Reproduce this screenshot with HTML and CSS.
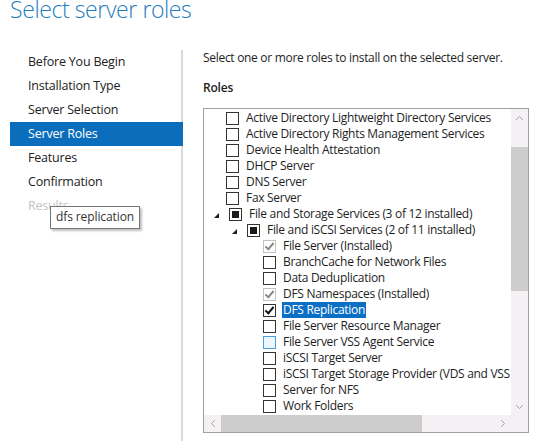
FILE: index.html
```html
<!DOCTYPE html>
<html lang="en">
<head>
  <meta charset="UTF-8">
  <title>Add Roles and Features Wizard</title>
  <link rel="stylesheet" href="styles.css">
</head>
<body>
  <h1 class="title">Select server roles</h1>

  <div class="wizard">
    <!-- Pasos del asistente -->
    <ul class="steps">
      <li>Before You Begin</li>
      <li>Installation Type</li>
      <li>Server Selection</li>
      <li class="active">Server Roles</li>
      <li>Features</li>
      <li>Confirmation</li>
      <li class="disabled">Results
        <span class="tooltip">dfs replication</span>
      </li>
    </ul>

    <!-- Contenido -->
    <div class="content">
      <p class="intro">Select one or more roles to install on the selected server.</p>
      <p class="label">Roles</p>

      <div class="listbox">
        <div class="rows">
          <div class="row lvl0"><span class="cb"></span><span class="txt">Active Directory Lightweight Directory Services</span></div>
          <div class="row lvl0"><span class="cb"></span><span class="txt">Active Directory Rights Management Services</span></div>
          <div class="row lvl0"><span class="cb"></span><span class="txt">Device Health Attestation</span></div>
          <div class="row lvl0"><span class="cb"></span><span class="txt">DHCP Server</span></div>
          <div class="row lvl0"><span class="cb"></span><span class="txt">DNS Server</span></div>
          <div class="row lvl0"><span class="cb"></span><span class="txt">Fax Server</span></div>
          <div class="row lvl0 parent"><span class="arrow"></span><span class="cb partial"></span><span class="txt">File and Storage Services (3 of 12 installed)</span></div>
          <div class="row lvl1 parent"><span class="arrow"></span><span class="cb partial"></span><span class="txt">File and iSCSI Services (2 of 11 installed)</span></div>
          <div class="row lvl2"><span class="cb checked grey"></span><span class="txt">File Server (Installed)</span></div>
          <div class="row lvl2"><span class="cb"></span><span class="txt">BranchCache for Network Files</span></div>
          <div class="row lvl2"><span class="cb"></span><span class="txt">Data Deduplication</span></div>
          <div class="row lvl2"><span class="cb checked grey"></span><span class="txt">DFS Namespaces (Installed)</span></div>
          <div class="row lvl2"><span class="cb checked"></span><span class="txt selected">DFS Replication</span></div>
          <div class="row lvl2"><span class="cb"></span><span class="txt">File Server Resource Manager</span></div>
          <div class="row lvl2"><span class="cb hover"></span><span class="txt">File Server VSS Agent Service</span></div>
          <div class="row lvl2"><span class="cb"></span><span class="txt">iSCSI Target Server</span></div>
          <div class="row lvl2"><span class="cb"></span><span class="txt">iSCSI Target Storage Provider (VDS and VSS hardware providers)</span></div>
          <div class="row lvl2"><span class="cb"></span><span class="txt">Server for NFS</span></div>
          <div class="row lvl2"><span class="cb"></span><span class="txt">Work Folders</span></div>
          <div class="row lvl0"><span class="cb"></span><span class="txt">Host Guardian Service</span></div>
        </div>

        <div class="vscroll">
          <span class="sb-btn">
            <svg width="9" height="6" viewBox="0 0 9 6"><path d="M1 5 L4.5 1.5 L8 5" fill="none" stroke="#a6a6a6" stroke-width="1"/></svg>
          </span>
          <div class="v-track"><div class="v-gap-top"></div><div class="v-thumb"></div></div>
          <span class="sb-btn">
            <svg width="9" height="6" viewBox="0 0 9 6"><path d="M1 1 L4.5 4.5 L8 1" fill="none" stroke="#a6a6a6" stroke-width="1"/></svg>
          </span>
        </div>

        <div class="hscroll">
          <span class="sb-btn">
            <svg width="6" height="9" viewBox="0 0 6 9"><path d="M5 1 L1.5 4.5 L5 8" fill="none" stroke="#a6a6a6" stroke-width="1"/></svg>
          </span>
          <div class="h-track"><div class="h-thumb"></div></div>
          <span class="sb-btn">
            <svg width="6" height="9" viewBox="0 0 6 9"><path d="M1 1 L4.5 4.5 L1 8" fill="none" stroke="#a6a6a6" stroke-width="1"/></svg>
          </span>
        </div>

        <div class="corner"></div>
      </div>
    </div>
  </div>
</body>
</html>
```

FILE: styles.css
```css
body {
  margin: 0;
  font-family: "Open Sans", "Noto Sans", sans-serif;
  font-size: 12px;
  color: #1e1e1e;
  background: #fff;
  width: 542px;
  height: 441px;
  overflow: hidden;
}
/* Titulo */
.title {
  margin: -6px 0 0 10px;
  height: 56px;
  font-size: 23px;
  font-weight: 300;
  color: #1f7dbd;
  line-height: 30px;
  letter-spacing: -0.4px;
}
.wizard {
  display: flex;
  height: 391px;
}
/* Columna de pasos */
.steps {
  list-style: none;
  margin: 0;
  padding: 0 0 0 10px;
  width: 171px;
  border-right: 2px solid #d9d9d9;
}
.steps li {
  position: relative;
  height: 24px;
  line-height: 24px;
  padding-left: 18px;
  font-size: 12.5px;
  color: #222;
  letter-spacing: -0.2px;
}
.steps li.active {
  background: #0a6ebd;
  color: #fff;
  margin-right: -2px;
}
.steps li.disabled {
  color: #c4c4c4;
}
.tooltip {
  position: absolute;
  left: 40px;
  top: 12px;
  padding: 0 5px;
  height: 21px;
  line-height: 20px;
  font-size: 12px;
  color: #333;
  background: #fff;
  border: 1px solid #767676;
  box-shadow: 2px 2px 2px rgba(0,0,0,0.25);
  white-space: nowrap;
  letter-spacing: -0.1px;
}
/* Contenido */
.content {
  flex: 1;
  padding-left: 20px;
}
.intro {
  margin: 0;
  height: 30px;
  line-height: 16px;
  letter-spacing: -0.3px;
}
.label {
  margin: 0;
  height: 28px;
  line-height: 16px;
  font-weight: 600;
  letter-spacing: -0.2px;
}
.listbox {
  width: 324px;
  height: 323px;
  border: 1px solid #a0a0a0;
  display: grid;
  grid-template-columns: 1fr 17px;
  grid-template-rows: 1fr 17px;
  overflow: hidden;
}
.rows {
  padding-top: 1px;
  overflow: hidden;
  white-space: nowrap;
}
.row {
  height: 16px;
  display: flex;
  align-items: center;
  line-height: 16px;
}
.row.lvl0 { padding-left: 22px; }
.row.lvl1 { padding-left: 40px; }
.row.lvl2 { padding-left: 59px; }
.row.parent.lvl0 { padding-left: 7px; }
.row.parent.lvl1 { padding-left: 25px; }
.arrow {
  width: 0;
  height: 0;
  border-left: 5px solid transparent;
  border-bottom: 5px solid #1e1e1e;
  margin: 2px 10px 0 3px;
}
.cb {
  flex: none;
  width: 11px;
  height: 11px;
  border: 1px solid #333;
  background: #fff;
  position: relative;
}
.cb.partial::after {
  content: "";
  position: absolute;
  left: 2px;
  top: 2px;
  width: 7px;
  height: 7px;
  background: #1a1a1a;
}
.cb.checked::after {
  content: "";
  position: absolute;
  left: 3px;
  top: 0px;
  width: 3px;
  height: 7px;
  border-right: 2px solid #111;
  border-bottom: 2px solid #111;
  transform: rotate(40deg);
}
.cb.grey {
  border-color: #c2c2c2;
}
.cb.grey::after {
  border-color: #8a8a8a;
}
.cb.hover {
  border-color: #4a9de0;
  background: #eef6fd;
}
.txt {
  margin-left: 6px;
  padding: 0 1px;
  letter-spacing: -0.3px;
}
.txt.selected {
  background: #0b6fc6;
  color: #fff;
}
/* Barras de desplazamiento */
.vscroll {
  display: flex;
  flex-direction: column;
  background: #f4f0f4;
}
.hscroll {
  display: flex;
  background: #f4f0f4;
}
.sb-btn {
  flex: none;
  width: 17px;
  height: 17px;
  display: flex;
  align-items: center;
  justify-content: center;
}
.v-track {
  flex: 1;
}
.v-gap-top {
  height: 21px;
}
.v-thumb {
  height: 144px;
  background: #cdcdcd;
}
.h-track {
  flex: 1;
}
.h-thumb {
  width: 201px;
  height: 17px;
  background: #cdcdcd;
}
.corner {
  background: #f4f0f4;
}
```
